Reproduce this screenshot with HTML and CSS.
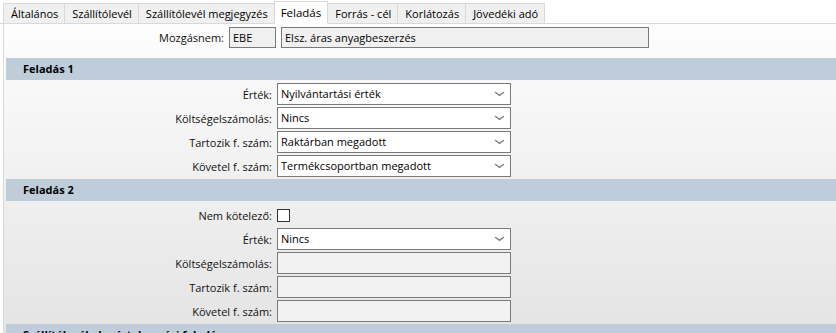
FILE: index.html
```
<!DOCTYPE html>
<html lang="hu">
  <head>
    <meta charset="UTF-8" />
    <title>Bizonylat - Feladás</title>
    <link rel="stylesheet" href="styles.css">
  </head>
  <body>
    <div class="tabs">
      <div class="tab">Általános</div>
      <div class="tab">Szállítólevél</div>
      <div class="tab">Szállítólevél megjegyzés</div>
      <div class="tab active">Feladás</div>
      <div class="tab">Forrás - cél</div>
      <div class="tab">Korlátozás</div>
      <div class="tab">Jövedéki adó</div>
    </div>

    <div class="panel">
      <div class="movement">
        <label>Mozgásnem:</label>
        <div class="box ro">EBE</div>
        <div class="box ro">Elsz. áras anyagbeszerzés</div>
      </div>

      <div class="section-head">Feladás 1</div>
      <div class="section-body">
        <div class="row">
          <label>Érték:</label>
          <div class="box select">Nyilvántartási érték</div>
        </div>
        <div class="row">
          <label>Költségelszámolás:</label>
          <div class="box select">Nincs</div>
        </div>
        <div class="row">
          <label>Tartozik f. szám:</label>
          <div class="box select">Raktárban megadott</div>
        </div>
        <div class="row">
          <label>Követel f. szám:</label>
          <div class="box select">Termékcsoportban megadott</div>
        </div>
      </div>

      <div class="section-head">Feladás 2</div>
      <div class="section-body">
        <div class="row">
          <label>Nem kötelező:</label>
          <div><span class="check"></span></div>
        </div>
        <div class="row">
          <label>Érték:</label>
          <div class="box select">Nincs</div>
        </div>
        <div class="row">
          <label>Költségelszámolás:</label>
          <div class="box off"></div>
        </div>
        <div class="row">
          <label>Tartozik f. szám:</label>
          <div class="box off"></div>
        </div>
        <div class="row">
          <label>Követel f. szám:</label>
          <div class="box off"></div>
        </div>
      </div>

      <div class="section-head">Szállítólevél alapértelmezési feladás</div>
    </div>
  </body>
</html>
```

FILE: styles.css
```
* {
  margin: 0;
  padding: 0;
  box-sizing: border-box;
}
html,
body {
  height: 100%;
  overflow: hidden;
}
body {
  font-family: "Open Sans", sans-serif;
  font-size: 11px;
  color: #000;
  background: #fff;
}

/* tab strip */
.tabs {
  display: flex;
  align-items: flex-end;
  height: 24px;
  padding-left: 3px;
  border-bottom: 1px solid #d9d9d9;
}
.tab {
  height: 21px;
  margin-bottom: -1px;
  padding: 0 6px 0 7px;
  line-height: 19px;
  background: #f0f0f0;
  border: 1px solid #d9d9d9;
  border-left: none;
  white-space: nowrap;
}
.tab:first-child {
  border-left: 1px solid #d9d9d9;
}
.tab.active {
  height: 23px;
  line-height: 21px;
  padding: 0 6px;
  background: #fff;
  border-bottom-color: #fff;
  border-left: 1px solid #d9d9d9;
  margin-left: -1px;
  font-size: 11.5px;
}

/* content */
.panel {
  margin-left: 3px;
  border-left: 1px solid #dadada;
  padding: 3px 0 0 2px;
  height: calc(100% - 24px);
  background: linear-gradient(#fdfdfd, #e4e4e4);
}

.movement {
  display: grid;
  grid-template-columns: 218px 47px 368px;
  column-gap: 5px;
  align-items: center;
  margin-bottom: 10px;
}
.movement .box {
  height: 21px;
}

label {
  text-align: right;
  white-space: nowrap;
  color: #111;
}

.box {
  height: 22px;
  border: 1px solid #7a7a7a;
  padding: 0 3px;
  line-height: 19px;
  white-space: nowrap;
  overflow: hidden;
}
.box.ro {
  background: #f0f0f0;
}
.box.off {
  background: #f2f2f2;
}
.box.select {
  position: relative;
  background: #fff;
}
.box.select::after {
  content: "";
  position: absolute;
  right: 8px;
  top: 6px;
  width: 4px;
  height: 4px;
  border-right: 1px solid #707070;
  border-bottom: 1px solid #707070;
  transform: scaleX(1.4) rotate(45deg);
}

.section-head {
  height: 22px;
  line-height: 21px;
  padding-left: 17px;
  background: #bfcddb;
  font-weight: 700;
}
.section-body {
  display: flex;
  flex-direction: column;
  gap: 2px;
  padding: 3px 0 2px;
}
.row {
  display: grid;
  grid-template-columns: 266px 234px;
  column-gap: 5px;
  align-items: center;
  height: 22px;
}
.check {
  display: block;
  width: 13px;
  height: 13px;
  border: 1px solid #333;
  background: #fff;
}
```
